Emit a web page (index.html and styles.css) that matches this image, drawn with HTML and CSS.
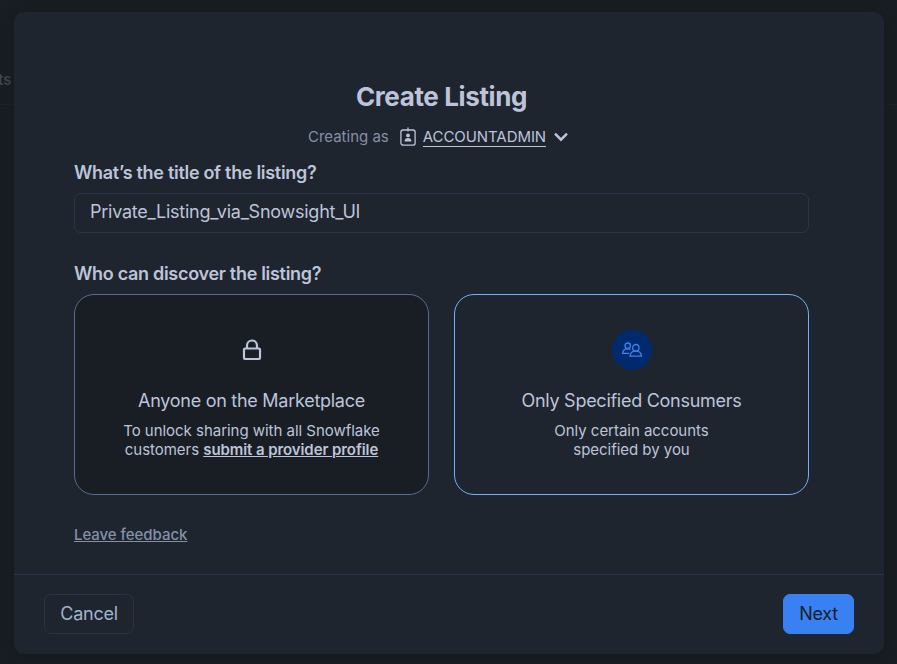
FILE: index.html
```html
<!DOCTYPE html>
<html lang="en">
<head>
<meta charset="utf-8">
<title>Create Listing</title>
<link rel="stylesheet" href="styles.css">
</head>
<body>
<div class="backdrop"><span class="backdrop-text">ts</span></div>
<main class="modal">
  <div class="content">
    <h1 class="title">Create Listing</h1>
    <div class="role">
      <span class="role-label">Creating as</span>
      <svg class="badge" width="16" height="20" viewBox="0 0 16 20" fill="none" stroke="currentColor" stroke-width="1.3"><rect x=".9" y="3" width="14.2" height="15.2" rx="2.2"/><path d="M8 .5v4"/><circle cx="8" cy="8.4" r="1.9" fill="currentColor" stroke="none"/><path d="M4.500 14.500c0-4.600 7-4.600 7 0z" fill="currentColor" stroke="none"/></svg>
      <span class="role-name">ACCOUNTADMIN</span>
      <svg class="chevron" width="14" height="10" viewBox="0 0 14 10" fill="none" stroke="currentColor" stroke-width="2.5"><path d="M1 1.7 7 7.7 13 1.7"/></svg>
    </div>
    <label class="question" for="name">What’s the title of the listing?</label>
    <input class="field" id="name" value="Private_Listing_via_Snowsight_UI">
    <h2 class="question second">Who can discover the listing?</h2>
    <div class="cards">
      <section class="card disabled">
        <div class="card-icon"><svg width="20" height="22" viewBox="0 0 20 22" fill="none" stroke="currentColor" stroke-width="2.2"><rect x="2" y="9.5" width="16" height="10.5" rx="1"/><path d="M5 9.5V6.500a5 5 0 0 1 10 0v3"/></svg></div>
        <h3 class="card-title">Anyone on the Marketplace</h3>
        <p class="card-text">To unlock sharing with all Snowflake<br>customers <a class="profile">submit a provider profile</a></p>
      </section>
      <section class="card selected">
        <div class="card-icon round"><svg width="20" height="16" viewBox="0 0 20 16" fill="none" stroke="currentColor" stroke-width="1.3"><circle cx="5.7" cy="3.7" r="2.7"/><path d="M7.2 11.3H.7C.8 8.4 2.8 6.8 5.7 6.8c1 0 1.900.2 2.600.6"/><circle cx="13.8" cy="5.7" r="3.200"/><path d="M8 14.200c.2-3.300 2.500-5 5.800-5s5.400 1.700 5.600 5z"/></svg></div>
        <h3 class="card-title">Only Specified Consumers</h3>
        <p class="card-text">Only certain accounts<br>specified by you</p>
      </section>
    </div>
    <a class="feedback">Leave feedback</a>
  </div>
  <footer class="footer">
    <button class="button cancel">Cancel</button>
    <button class="button next">Next</button>
  </footer>
</main>
</body>
</html>
```
FILE: styles.css
```css
* { box-sizing: border-box; }
body {
  margin: 0;
  height: 664px;
  padding: 12px 13px 10px 14px;
  overflow: hidden;
  background: #191e24;
  color: #bdc4d9;
  font-family: Inter, sans-serif;
}
h1, h2, h3, p { margin: 0; }
.backdrop {
  position: absolute;
  top: 0;
  left: 0;
  width: 100%;
  height: 105px;
  border-bottom: 1px solid #1d2430;
}
.backdrop-text {
  position: absolute;
  top: 71px;
  left: -2px;
  font-size: 15px;
  line-height: 18px;
  font-weight: 600;
  color: #414851;
}
.modal {
  position: relative;
  display: flex;
  flex-direction: column;
  height: 642px;
  border-radius: 10px;
  background: #1e252e;
  box-shadow: 0 2px 14px rgba(20, 23, 24, .85);
}
.content {
  display: flex;
  flex-direction: column;
  height: 562px;
  padding: 68px 75px 0 60px;
}
.title {
  text-align: center;
  font-size: 26px;
  line-height: 34px;
  font-weight: 700;
  letter-spacing: -.38px;
}
.role {
  display: flex;
  align-items: center;
  align-self: center;
  height: 20px;
  margin-top: 13px;
  margin-right: 7px;
  font-size: 15px;
  line-height: 18px;
}
.role-label { color: #8590a8; }
.badge { margin: -1px 7px 0 11px; }
.role-name {
  border-bottom: 1px solid #bdc4d9;
  letter-spacing: -.07px;
}
.chevron { margin-left: 8px; }
.question {
  margin-top: 14px;
  font-size: 18px;
  line-height: 24px;
  font-weight: 600;
  letter-spacing: -.3px;
}
.field {
  height: 40px;
  margin-top: 8px;
  padding: 0 15px 3px;
  border: 1px solid #28364b;
  border-radius: 7px;
  background: transparent;
  color: #bdc4d9;
  font: 400 18px Inter, sans-serif;
  letter-spacing: -.25px;
}
.second { margin-top: 29px; }
.cards {
  display: grid;
  grid-template-columns: 1fr 1fr;
  gap: 25px;
  margin-top: 8px;
}
.card {
  display: flex;
  flex-direction: column;
  align-items: center;
  height: 201px;
  padding-top: 35px;
  border: 1px solid #596b91;
  border-radius: 20px;
  text-align: center;
}
.disabled { background: #191e25; }
.selected { border-color: #75b0ff; }
.card-icon {
  display: grid;
  place-items: center;
  width: 40px;
  height: 40px;
}
.round {
  border-radius: 50%;
  background: #002a6c;
  color: #3b82f0;
}
.card-title {
  margin-top: 19px;
  font-size: 18px;
  line-height: 24px;
  font-weight: 400;
  letter-spacing: -.27px;
}
.card-text {
  margin-top: 8px;
  font-size: 15px;
  line-height: 19px;
  letter-spacing: -.03px;
}
.profile {
  font-weight: 600;
  letter-spacing: -.08px;
  text-decoration: underline;
}
.feedback {
  align-self: flex-start;
  margin-top: 30px;
  color: #8590a8;
  font-size: 15px;
  line-height: 20px;
  font-weight: 500;
  letter-spacing: -.05px;
  text-decoration: underline;
}
.footer {
  display: flex;
  align-items: flex-start;
  justify-content: space-between;
  height: 80px;
  padding: 19px 30px 0;
  border-top: 1px solid #28364b;
}
.button {
  height: 40px;
  padding: 0 0 2px;
  border: 1px solid #293247;
  border-radius: 7px;
  font: 400 18px Inter, sans-serif;
  letter-spacing: -.25px;
}
.cancel {
  width: 90px;
  background: transparent;
  color: #a0b4cf;
}
.next {
  width: 71px;
  border-color: #3981f2;
  background: #3981f2;
  color: #191e24;
}
```
